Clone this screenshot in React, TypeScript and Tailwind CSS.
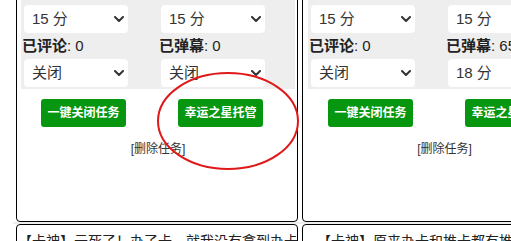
import React from "react";

const FONT = { fontFamily: '"Liberation Sans", "Noto Sans CJK SC", sans-serif' };

function Chevron() {
  return (
    <svg width="10" height="6" viewBox="0 0 10 6" className="shrink-0">
      <path d="M1 1 L5 5 L9 1" fill="none" stroke="#333" strokeWidth="2" strokeLinecap="round" strokeLinejoin="round" />
    </svg>
  );
}

function Sel({ text }: { text: string }) {
  return (
    <div className="ml-[3px] flex h-[28px] w-[104px] items-center justify-between rounded-[4px] bg-white pl-[8px] pr-[4px] text-[15px] text-[#333]">
      <span>{text}</span>
      <Chevron />
    </div>
  );
}

function Label({ name, value }: { name: string; value: string }) {
  return (
    <div className="ml-[1px] flex h-[26px] items-center whitespace-nowrap text-[15px] text-[#222]">
      <span className="font-bold">{name}</span>
      <span>: {value}</span>
    </div>
  );
}

type C = { s1: string; name: string; value: string; s2: string; btn: string };

function Card({ cols, pl }: { cols: C[]; pl: string }) {
  return (
    <div className={`h-[242px] w-[282px] shrink-0 rounded-[4px] border border-black bg-white pr-[1px] pt-[4px] ${pl}`}>
      <div className="grid w-[274px] grid-cols-2 bg-[#eeeeee] pb-[2px] pt-[20px]">
        {cols.map((c, i) => (
          <div key={i} className="flex flex-col">
            <Sel text={c.s1} />
            <Label name={c.name} value={c.value} />
            <Sel text={c.s2} />
          </div>
        ))}
      </div>
      <div className="mt-[10px] grid w-[274px] grid-cols-2">
        {cols.map((c, i) => (
          <div key={i} className="ml-[20px] flex h-[28px] w-[85px] items-center justify-center rounded-[3px] bg-[#07960f] text-[12px] font-bold text-white">
            {c.btn}
          </div>
        ))}
      </div>
      <div className="mt-[13px] flex h-[18px] items-center justify-center pl-[1px] pr-[2px] text-[12px] text-[#333]">
        <span>[删除任务]</span>
      </div>
    </div>
  );
}

export default function App() {
  return (
    <div className="relative h-[241px] w-[511px] overflow-hidden bg-white" style={FONT}>
      <div className="-mt-[20px] flex gap-[4px] pl-[16px]">
        <Card
          pl="pl-[4px]"
          cols={[
            { s1: "15 分", name: "已评论", value: "0", s2: "关闭", btn: "一键关闭任务" },
            { s1: "15 分", name: "已弹幕", value: "0", s2: "关闭", btn: "幸运之星托管" },
          ]}
        />
        <Card
          pl="pl-[5px]"
          cols={[
            { s1: "15 分", name: "已评论", value: "0", s2: "关闭", btn: "一键关闭任务" },
            { s1: "15 分", name: "已弹幕", value: "65", s2: "18 分", btn: "幸运之星托管" },
          ]}
        />
      </div>
      <div className="ml-[13px] h-[2px] bg-[#eeeeee]" />
      <div className="flex gap-[4px] pl-[16px]">
        <div className="h-[60px] w-[282px] shrink-0 overflow-hidden whitespace-nowrap rounded-[4px] border border-black bg-white pl-[1px] pt-[6px] text-[14px] text-[#222]">
          【卡神】云死了！办了卡，就我没有拿到办卡
        </div>
        <div className="h-[60px] w-[282px] shrink-0 overflow-hidden whitespace-nowrap rounded-[4px] border border-black bg-white pl-[14px] pt-[6px] text-[14px] text-[#222]">
          【卡神】原来办卡和推卡都有推广
        </div>
      </div>
      <svg className="pointer-events-none absolute left-0 top-0" width="511" height="241">
        <ellipse cx="228" cy="121" rx="70" ry="48" fill="none" stroke="#e01818" strokeWidth="2" />
      </svg>
    </div>
  );
}
